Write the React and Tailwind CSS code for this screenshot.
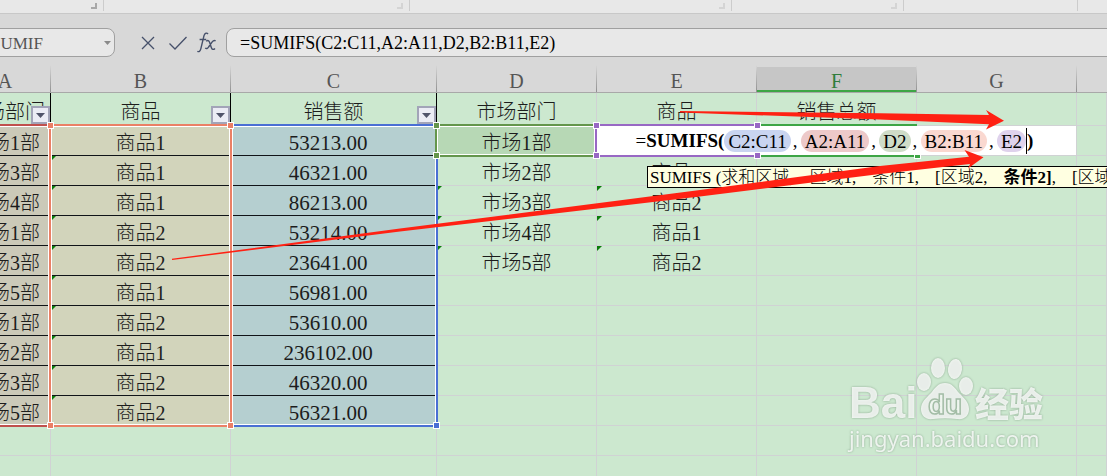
const COLUMNS = ['A', 'B', 'C', 'D', 'E', 'F', 'G', ''];

const HEADINGS = ['市场部门', '商品', '销售额', '市场部门', '商品', '销售总额', '', ''];

const ROWS = [
  ['市场1部', '商品1', '53213.00', '市场1部', ''],
  ['市场3部', '商品1', '46321.00', '市场2部', '商品1'],
  ['市场4部', '商品1', '86213.00', '市场3部', '商品2'],
  ['市场1部', '商品2', '53214.00', '市场4部', '商品1'],
  ['市场3部', '商品2', '23641.00', '市场5部', '商品2'],
  ['市场5部', '商品1', '56981.00', '', ''],
  ['市场1部', '商品2', '53610.00', '', ''],
  ['市场2部', '商品1', '236102.00', '', ''],
  ['市场3部', '商品2', '46320.00', '', ''],
  ['市场5部', '商品2', '56321.00', '', ''],
];

const FILLS = ['bg-[#cbc9b8]', 'bg-[#d2d4bb]', 'bg-[#b5cfd0]'];

const Ribbon = () => (
  <div className="flex h-3.5 shrink-0 border-b border-[#c8c8c8] bg-[#e8e8e8]">
    {[
      ['w-[104px]', 'border-[#a8a8a8]'],
      ['w-[306px]', 'border-[#d4d4d4]'],
      ['w-[322px]', 'border-[#d4d4d4]'],
      ['w-[172px]', 'border-[#d4d4d4]'],
      ['w-[174px]', 'border-transparent'],
    ].map(([width, corner]) => (
      <div key={width} className={`flex h-[11px] shrink-0 justify-end border-r border-[#cccccc] pr-1.5 pt-[3px] ${width}`}>
        <span className={`h-1.5 w-1.5 border-b-2 border-r-2 ${corner}`} />
      </div>
    ))}
  </div>
);

const FormulaBar = () => (
  <div className="flex h-[51px] shrink-0 items-center bg-[#d8d8d8] pt-1.5">
    <div className="-ml-10 flex h-[29px] w-[155px] shrink-0 items-center rounded-lg border border-[#a0a0a0] bg-[#e8e8e8] pr-[3px]">
      <input
        aria-label="名称框"
        defaultValue="SUMIF"
        className="w-full min-w-0 flex-1 bg-transparent pl-[30px] pt-0.5 text-[17px] text-[#555] outline-none"
      />
      <button type="button" aria-label="展开名称">
        <svg width="7" height="4" viewBox="0 0 7 4">
          <path d="M0 0h7L3.5 4z" fill="#8a8a8a" />
        </svg>
      </button>
    </div>
    <div className="flex w-[111px] shrink-0 items-center gap-3.5 pl-[26px]">
      <button type="button" aria-label="取消">
        <svg width="14" height="14" viewBox="0 0 14 14" fill="none" stroke="#46506a" strokeWidth="1.3">
          <path d="M1 1l12 12M13 1L1 13" />
        </svg>
      </button>
      <button type="button" aria-label="输入">
        <svg width="18" height="14" viewBox="0 0 18 14" fill="none" stroke="#46506a" strokeWidth="1.3">
          <path d="M0.5 7.5L6 13L17.5 1" />
        </svg>
      </button>
      <button type="button" aria-label="插入函数" className="-ml-1">
        <svg width="20" height="21" viewBox="0 0 20 21" fill="none" stroke="#46506a" strokeWidth="1.4">
          <path d="M11 2C10 .6 7.8.8 7 3.6L3.8 16.8C3.2 19.4 1.8 20.2.4 19.2M2.6 7.5h6.6" />
          <path d="M9.2 9.2c1.6-1.4 2.8-.6 3.4 1.2l1.8 5.4c.6 1.8 2 2.2 3.6.6M18.6 8.8c-1.4-.8-2.4-.2-3.6 1.4l-3.4 4.8c-1 1.6-2.2 2-3.4 1" />
        </svg>
      </button>
    </div>
    <input
      aria-label="编辑栏"
      defaultValue="=SUMIFS(C2:C11,A2:A11,D2,B2:B11,E2)"
      className="-mr-3 h-[29px] min-w-0 flex-1 rounded-lg border border-[#a0a0a0] bg-[#e8e8e8] pl-[13px] pt-0.5 text-lg text-black outline-none"
    />
  </div>
);

const FilterButton = () => (
  <button
    type="button"
    aria-label="筛选"
    className="absolute bottom-px right-0 flex h-[18px] w-[19px] items-center justify-center border-2 border-[#a2a4b8] bg-[#ebecf5]"
  >
    <svg width="9" height="5" viewBox="0 0 9 5">
      <path d="M0 0h9L4.5 5z" fill="#50546a" />
    </svg>
  </button>
);

const ErrorMark = () => (
  <svg className="absolute left-0 top-0" width="6" height="5" viewBox="0 0 6 5">
    <path d="M0 0h5L0 5z" fill="#0a7d0a" />
  </svg>
);

const Cell = ({ row, col, value }) => {
  const filled = col < 3;
  const marked = row > 0 && (col === 1 || ((col === 3 || col === 4) && value && row > 1));
  let look = 'border-[#d0d2d4]';
  if (filled) look = `border-b-[#101418] border-r-transparent ${FILLS[col]}`;
  if (row === 0 && col === 3) look = 'border-[#d0d2d4] bg-[#b7d8b5]';
  return (
    <td
      className={`relative h-[30px] border-b border-r p-0 text-center ${
        col === 2 ? 'pr-[11px] text-[21px]' : 'text-xl'
      } leading-[20px] ${look}`}
    >
      {marked ? <ErrorMark /> : null}
      <span className="block pt-1">{value}</span>
    </td>
  );
};

const Sheet = () => (
  <table className="-ml-10 w-[calc(100%+40px)] table-fixed border-separate border-spacing-0 whitespace-nowrap">
    <colgroup>
      <col className="w-[91px]" />
      <col className="w-[180px]" />
      <col className="w-[206px]" />
      <col className="w-[160px]" />
      <col className="w-[160px]" />
      <col className="w-[160px]" />
      <col className="w-[160px]" />
      <col />
    </colgroup>
    <thead>
      <tr>
        {COLUMNS.map((name, i) => (
          <th
            key={name || 'rest'}
            scope="col"
            className={`h-7 border-b border-[#a8a8a8] bg-[#d8d8d8] p-0 text-xl font-normal leading-[22px] ${
              name === 'F' ? 'text-[#2f7d3b]' : 'text-[#555]'
            }`}
          >
            <div className="flex h-[27px]">
              <span
                className={
                  name === 'F' ? 'mt-0.5 flex-1 border-b-2 border-[#3da545] bg-[#c6c6c6] pt-[3px]' : 'flex-1 pt-[5px]'
                }
              >
                {name}
              </span>
              {i < 7 && <i className="w-px bg-linear-to-b from-[#d8d8d8] to-[#909090]" />}
            </div>
          </th>
        ))}
      </tr>
    </thead>
    <tbody>
      <tr>
        {HEADINGS.map((text, i) => (
          <td
            key={i}
            className={`relative h-[33px] border-b border-r border-b-[#d0d2d4] p-0 text-center text-xl leading-[22px] ${
              i < 3 ? 'border-r-black' : 'border-r-[#d0d2d4]'
            }`}
          >
            <span className="block pt-1.5">{text}</span>
            {i < 3 && <FilterButton />}
          </td>
        ))}
      </tr>
      {ROWS.map((row, r) => (
        <tr key={r}>
          {COLUMNS.map((name, c) => (
            <Cell key={name} row={r} col={c} value={row[c] || ''} />
          ))}
        </tr>
      ))}
      {[12, 13].map((r) => (
        <tr key={r}>
          {COLUMNS.map((name) => (
            <td key={name} className="h-[30px] border-b border-r border-[#d0d2d4] p-0" />
          ))}
        </tr>
      ))}
    </tbody>
  </table>
);

const Handle = ({ place }) => <i className={`absolute h-[7px] w-[7px] border border-white ${place}`} />;

// Coloured outlines of the ranges that the formula refers to
const Ranges = () => (
  <>
    <div className="absolute -left-2.5 top-[59px] h-[303px] w-[61px] border-2 border-[#c0504d] ring-1 ring-inset ring-white" />
    <div className="absolute left-[230px] top-[59px] h-[303px] w-[208px] border-2 border-[#4a6fd4] ring-1 ring-inset ring-white">
      <Handle place="-right-1 -bottom-1 bg-[#4a6fd4]" />
    </div>
    <div className="absolute left-[49px] top-[59px] h-[303px] w-[183px] border-2 border-[#ea8066] ring-1 ring-inset ring-white">
      <Handle place="-left-1 -top-1 bg-[#ea8066]" />
      <Handle place="-right-1 -top-1 bg-[#ea8066]" />
      <Handle place="-left-1 -bottom-1 bg-[#ea8066]" />
      <Handle place="-right-1 -bottom-1 bg-[#ea8066]" />
    </div>
    <div className="absolute left-[435px] top-[59px] h-[33px] w-[162px] border-2 border-[#64964c] ring-1 ring-inset ring-white">
      <Handle place="-left-1 -top-1 bg-[#64964c]" />
      <Handle place="-left-1 -bottom-1 bg-[#64964c]" />
    </div>
  </>
);

const Ref = ({ children, tone }) => <span className={`h-[22px] rounded-[11px] px-1 ${tone}`}>{children}</span>;

const CellEditor = () => (
  <>
    <div className="absolute left-[757px] top-[59px] h-[33px] w-[160px] border-y-2 border-[#3da545]">
      <Handle place="-right-1 -bottom-1 bg-[#3da545]" />
    </div>
    <div className="absolute left-[597px] top-[61px] flex h-[29px] w-[479px] items-center justify-center bg-white pr-1 text-[19px] leading-[24px] text-black">
      <span>=</span>
      <b className="font-bold">SUMIFS(</b>
      <Ref tone="bg-[#c9d4f0]">C2:C11</Ref>
      <span className="w-2.5 pl-0.5">,</span>
      <Ref tone="bg-[#edc9c9]">A2:A11</Ref>
      <span className="w-2.5 pl-0.5">,</span>
      <Ref tone="bg-[#cfdcc8]">D2</Ref>
      <span className="w-2.5 pl-0.5">,</span>
      <Ref tone="bg-[#fad8d0]">B2:B11</Ref>
      <span className="w-2.5 pl-0.5">,</span>
      <Ref tone="bg-[#dfd2ec]">E2</Ref>
      <i className="h-[26px] w-px bg-black" />
      <b className="font-bold">)</b>
    </div>
    <div className="absolute left-[595px] top-[59px] h-[33px] w-[162px] border-y-2 border-l-2 border-[#9868c4]">
      <Handle place="-left-1 -top-1 bg-[#9868c4]" />
      <Handle place="-right-1 -top-1 bg-[#9868c4]" />
      <Handle place="-left-1 -bottom-1 bg-[#9868c4]" />
      <Handle place="-right-1 -bottom-1 bg-[#9868c4]" />
    </div>
  </>
);

const ArgumentHint = () => (
  <div
    role="tooltip"
    className="absolute left-[647px] right-0 top-[101px] flex h-[22px] items-center gap-4 overflow-hidden whitespace-nowrap border border-r-0 border-black bg-[#ffffe1] pl-0.5 pt-0.5 text-[17px] leading-[18px] text-black"
  >
    <span>SUMIFS (求和区域,</span>
    <span>区域1,</span>
    <span>条件1,</span>
    <span>[区域2,</span>
    <span>
      <b className="font-bold">条件2]</b>,
    </span>
    <span>[区域3,</span>
  </div>
);

const Watermark = () => (
  <div className="absolute left-[849px] top-[295px] w-[200px] font-normal text-white/80 drop-shadow-[0_0_1px_#7f9a83]">
    <div className="flex h-[60px] items-end">
      <span className="w-[66px] font-['Liberation_Sans',sans-serif] text-[44px] font-bold leading-[34px]">Bai</span>
      <svg className="shrink-0" width="60" height="64" viewBox="0 0 60 64" fill="currentColor">
        <ellipse cx="9" cy="26" rx="7" ry="9" />
        <ellipse cx="23" cy="12" rx="7" ry="10" />
        <ellipse cx="40" cy="13" rx="7" ry="10" transform="rotate(8 40 13)" />
        <ellipse cx="51" cy="30" rx="7" ry="9" />
        <path d="M30 27c-7 0-10 5-14 10C11 42 6 46 6 53c0 7 5 11 12 10 8-1 16-1 24 0 7 1 12-3 12-10 0-7-5-11-10-16-4-5-7-10-14-10z" />
        <text
          x="13"
          y="58"
          fill="#eef5ee"
          stroke="#a3bda6"
          strokeWidth="1.5"
          fontFamily="Liberation Sans, sans-serif"
          fontSize="28"
          fontWeight="bold"
        >
          du
        </text>
      </svg>
      <span className="font-['Noto_Sans_CJK_SC',sans-serif] text-[34px] font-black leading-[35px]">经验</span>
    </div>
    <p className="pt-1 font-['Noto_Sans',sans-serif] text-[22px] leading-[28px]">jingyan.baidu.com</p>
  </div>
);

const Arrows = () => (
  <svg className="absolute left-0 top-0" width="1107" height="411" viewBox="0 65 1107 411" fill="#ff2113">
    <path d="M680 111L880 113.3L989 115L986 110L1004 120.7L986 129.5L989 124.3L880 119.5L680 112.5z" />
    <path d="M172 258.8L400 228.5L700 190L880 166L969 156.7L964.5 150L983.5 157.3L968 168.5L970 164L880 174L700 196.5L400 231.5L172 260z" />
  </svg>
);

const App = () => (
  <div className="flex h-screen flex-col overflow-hidden bg-[#cce8cf] font-['Liberation_Serif','Noto_Sans_CJK_SC',serif] font-light text-[#1c1c1c]">
    <Ribbon />
    <FormulaBar />
    <main className="relative min-h-0 flex-1 overflow-hidden">
      <Sheet />
      <Ranges />
      <CellEditor />
      <ArgumentHint />
      <Watermark />
      <Arrows />
    </main>
  </div>
);

export default App;
